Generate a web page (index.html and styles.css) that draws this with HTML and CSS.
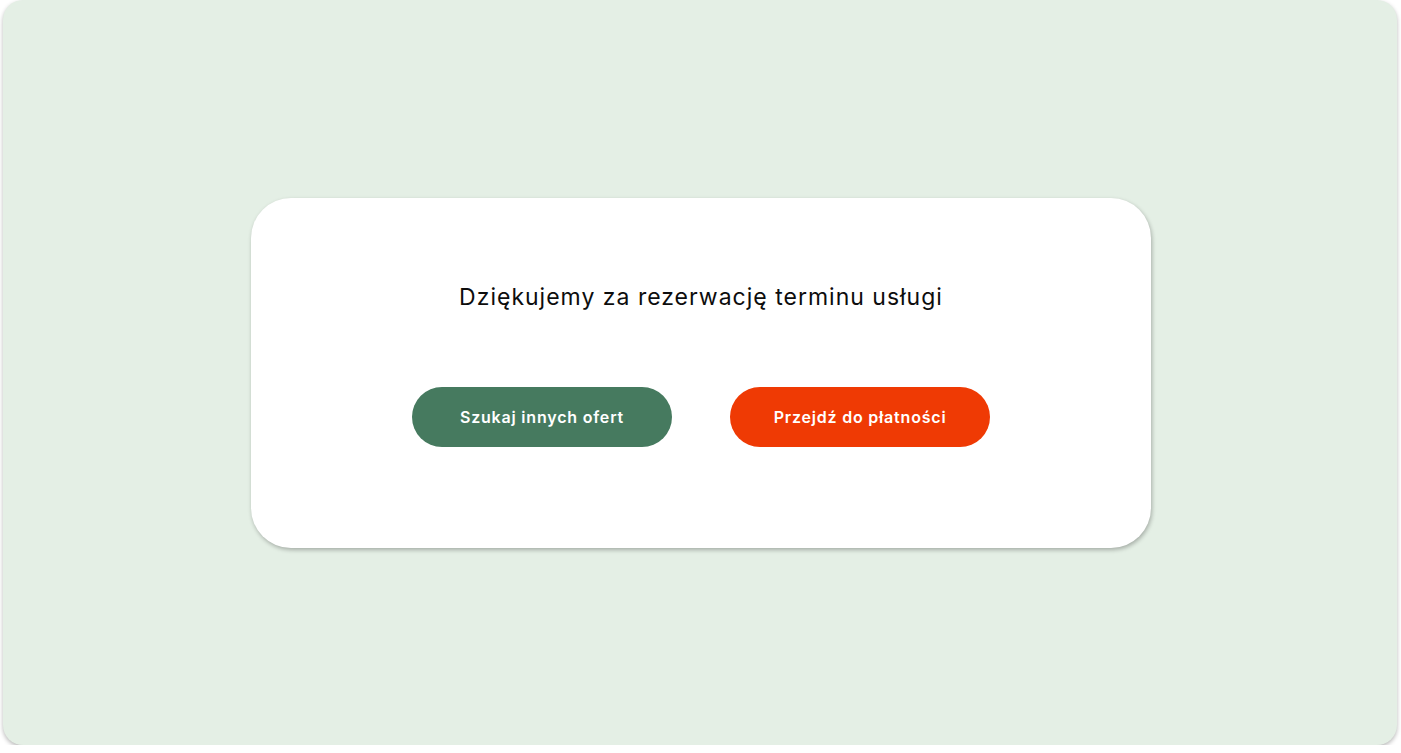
FILE: index.html
```html
<!DOCTYPE html>
<html lang="pl">
<head>
<meta charset="utf-8">
<title>Dziękujemy</title>
<link rel="stylesheet" href="styles.css">
</head>
<body>
<div class="frame">
  <div class="card">
    <h1 class="title">Dziękujemy za rezerwację terminu usługi</h1>
    <div class="actions">
      <button class="btn btn-green">Szukaj innych ofert</button>
      <button class="btn btn-orange">Przejdź do płatności</button>
    </div>
  </div>
</div>
</body>
</html>
```

FILE: styles.css
```css
* { box-sizing: border-box; }
html, body { margin: 0; padding: 0; background: #ffffff; }
body { font-family: "Inter", "Noto Sans", sans-serif; }
.frame {
  margin-left: 3px;
  width: 1394px;
  height: 745px;
  background: #e4efe5;
  border-radius: 20px;
  box-shadow: 0 2px 4px rgba(0, 0, 0, 0.28);
  display: flex;
  align-items: center;
  justify-content: center;
}
.card {
  width: 900px;
  height: 350px;
  background: #ffffff;
  border-radius: 40px;
  box-shadow: 1px 2px 4px rgba(0, 0, 0, 0.28);
  display: flex;
  flex-direction: column;
  align-items: center;
  padding-top: 84px;
  margin-left: 2px;
}
.title {
  margin: 0;
  font-size: 23px;
  line-height: 30px;
  font-weight: 400;
  letter-spacing: 1px;
  color: #0d0d0d;
}
.actions {
  margin-top: 75px;
  display: flex;
  gap: 58px;
}
.btn {
  width: 260px;
  height: 60px;
  border: none;
  border-radius: 30px;
  color: #ffffff;
  font-family: "Inter", "Noto Sans", sans-serif;
  font-size: 16px;
  font-weight: 600;
  letter-spacing: 0.8px;
  cursor: pointer;
}
.btn-green { background: #467a5f; }
.btn-orange { background: #ef3a04; }
```
